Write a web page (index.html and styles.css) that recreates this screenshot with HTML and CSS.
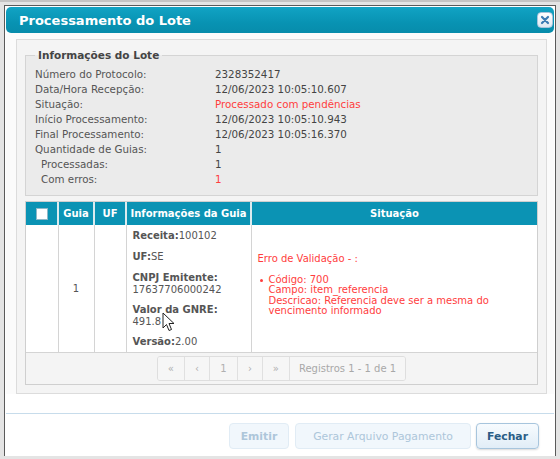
FILE: index.html
```html
<!DOCTYPE html>
<html lang="pt">
<head>
<meta charset="utf-8">
<title>Processamento do Lote</title>
<link rel="stylesheet" href="styles.css">
</head>
<body>
<div class="dialog">
  <div class="titlebar">
    <span class="title">Processamento do Lote</span>
    <span class="close"><svg width="10" height="10" viewBox="0 0 10 10"><path d="M2 2 L8 8 M8 2 L2 8" stroke="#3b7bb3" stroke-width="2.2" stroke-linecap="round"/></svg></span>
  </div>
  <div class="content">
    <div class="panel">
      <fieldset class="info">
        <legend>Informações do Lote</legend>
        <div class="grid">
          <span class="lbl">Número do Protocolo:</span><span class="val">2328352417</span>
          <span class="lbl">Data/Hora Recepção:</span><span class="val">12/06/2023 10:05:10.607</span>
          <span class="lbl">Situação:</span><span class="val red">Processado com pendências</span>
          <span class="lbl">Início Processamento:</span><span class="val">12/06/2023 10:05:10.943</span>
          <span class="lbl">Final Processamento:</span><span class="val">12/06/2023 10:05:16.370</span>
          <span class="lbl">Quantidade de Guias:</span><span class="val">1</span>
          <span class="lbl sub">Processadas:</span><span class="val">1</span>
          <span class="lbl sub">Com erros:</span><span class="val red">1</span>
        </div>
      </fieldset>
      <div class="tablewrap">
        <table class="grid-table">
          <thead>
            <tr>
              <th class="c-chk"><span class="chk"></span></th>
              <th class="c-guia">Guia</th>
              <th class="c-uf">UF</th>
              <th class="c-inf">Informações da Guia</th>
              <th class="c-sit">Situação</th>
            </tr>
          </thead>
          <tbody>
            <tr>
              <td class="c-chk"></td>
              <td class="c-guia">1</td>
              <td class="c-uf"></td>
              <td class="c-inf">
                <p><b>Receita:</b>100102</p>
                <p><b>UF:</b>SE</p>
                <p><b>CNPJ Emitente:</b><br>17637706000242</p>
                <p><b>Valor da GNRE:</b><br>491.8</p>
                <p><b>Versão:</b>2.00</p>
              </td>
              <td class="c-sit">
                <p class="err">Erro de Validação - :</p>
                <ul class="errlist">
                  <li>Código: 700<br>Campo: item_referencia<br>Descricao: Referencia deve ser a mesma do vencimento informado</li>
                </ul>
              </td>
            </tr>
          </tbody>
        </table>
        <div class="pager">
          <div class="pgroup">
            <span class="pbtn w26">«</span><span class="pbtn w24">‹</span><span class="pbtn w27">1</span><span class="pbtn w24">›</span><span class="pbtn w26">»</span><span class="pbtn pinfo">Registros 1 - 1 de 1</span>
          </div>
        </div>
      </div>
    </div>
  </div>
  <div class="footer">
    <button class="btn disabled b-emitir">Emitir</button>
    <button class="btn disabled b-gerar">Gerar Arquivo Pagamento</button>
    <button class="btn primary b-fechar">Fechar</button>
  </div>
  <svg class="cursor" width="13" height="20" viewBox="0 0 13 20"><path d="M1 1 L1 16 L4.5 12.5 L7 18.5 L9.5 17.5 L7 11.5 L12 11.5 Z" fill="#fff" stroke="#222" stroke-width="1" stroke-linejoin="round"/></svg>
</div>
</body>
</html>
```

FILE: styles.css
```css
html, body {
  margin: 0;
  padding: 0;
}
body {
  background: #e4e4e4;
  font-family: "DejaVu Sans", Verdana, sans-serif;
  font-size: 10px;
  color: #555;
  padding: 3px 0 0 4px;
  height: 456px;
  overflow: hidden;
  box-sizing: border-box;
  border-top: 2px solid #c4c4c4;
}
.dialog {
  position: relative;
  width: 552px;
  height: 470px;
  background: #fff;
  border: 1px solid #5a5a5a;
  border-bottom: none;
  box-sizing: border-box;
  padding: 1px;
}
.titlebar {
  height: 26px;
  border-radius: 5px;
  background: linear-gradient(#11a3c4, #0893b3 60%, #078cab);
  display: flex;
  align-items: center;
  justify-content: space-between;
  padding: 0 1px 0 13px;
}
.title {
  color: #fff;
  font-weight: bold;
  font-size: 13px;
}
.close {
  width: 16px;
  height: 16px;
  border-radius: 4px;
  background: linear-gradient(#ffffff, #dfe9f2);
  border: 1px solid #a8c4dc;
  display: flex;
  align-items: center;
  justify-content: center;
  box-sizing: border-box;
}
.content {
  padding: 6px 7px 0 10px;
  background: #fbfbfb;
}
.panel {
  border: 1px solid #dcdcdc;
  background: #f4f4f4;
  padding: 9px 8px 8px 8px;
}
.info {
  margin: 0;
  border: 1px solid #d4d4d4;
  background: #ebebeb;
  padding: 6px 9px 8px 9px;
}
.info legend {
  font-weight: bold;
  color: #444;
  font-size: 10.5px;
  padding: 0 3px;
  margin-left: 0;
}
.grid {
  display: grid;
  grid-template-columns: 180px auto;
  line-height: 15px;
  font-size: 10.3px;
}
.lbl { color: #555; }
.lbl.sub { padding-left: 6px; }
.val { color: #444; }
.red { color: #ff3d3d; }

.tablewrap {
  margin-top: 5px;
  border: 1px solid #cfcfcf;
  background: #f4f4f4;
}
.grid-table {
  width: 100%;
  border-collapse: collapse;
  table-layout: fixed;
  background: #fff;
}
.grid-table th {
  background: #0b93b4;
  color: #fff;
  font-weight: bold;
  height: 23px;
  padding: 0;
  border-left: 2px solid #dcebef;
  text-align: center;
  font-size: 10px;
}
.grid-table th:first-child { border-left: none; }
.grid-table td {
  border-left: 1px solid #d4d4d4;
  border-bottom: 1px solid #d4d4d4;
  padding: 0;
  vertical-align: middle;
  color: #555;
}
.grid-table td:first-child { border-left: none; }
.c-chk { width: 31px; }
.c-guia { width: 34px; text-align: center; }
.c-uf { width: 30px; }
.c-inf { width: 123px; }
.chk {
  display: inline-block;
  width: 10px;
  height: 10px;
  background: #fff;
  border: 1px solid #8fb8c8;
  vertical-align: middle;
}
td.c-guia { text-align: center; }
td.c-inf {
  padding: 5px 5px 4px 6px;
  line-height: 12px;
  vertical-align: top;
}
td.c-inf p { margin: 0 0 8px 0; }
td.c-inf p:nth-child(1), td.c-inf p:nth-child(2) { margin-bottom: 9px; }
td.c-inf p:last-child { margin-bottom: 0; }
td.c-inf b { color: #555; }
td.c-sit {
  padding: 0 6px 8px 6px;
  color: #ff3d3d;
  line-height: 10.4px;
}
.err { margin: 0 0 10px 0; line-height: 12px; }
.errlist {
  margin: 0;
  padding-left: 11px;
  list-style: none;
}
.errlist li { position: relative; }
.errlist li::before {
  content: "";
  position: absolute;
  left: -9px;
  top: 4px;
  width: 3px;
  height: 3px;
  border-radius: 50%;
  background: #ff3d3d;
}
.pager {
  height: 31px;
  display: flex;
  align-items: center;
  justify-content: center;
}
.pgroup {
  display: flex;
  height: 23px;
  border: 1px solid #dedede;
  border-radius: 3px;
  background: #f6f6f6;
  overflow: hidden;
}
.pbtn {
  display: flex;
  align-items: center;
  justify-content: center;
  border-left: 1px solid #e0e0e0;
  color: #b0b0b0;
  font-size: 10px;
  background: #f6f6f6;
}
.pbtn:first-child { border-left: none; }
.w26 { width: 26px; }
.w24 { width: 24px; }
.w27 { width: 27px; }
.pbtn.pinfo { padding: 0 9px; color: #a8a8a8; }

.footer {
  margin-top: 19px;
  border-top: 1px solid #c7dceb;
  display: flex;
  justify-content: flex-end;
  padding: 9px 15px 0 0;
}
.btn {
  height: 26px;
  font-family: "DejaVu Sans", Verdana, sans-serif;
  font-size: 10.8px;
  border-radius: 4px;
  padding: 0;
  box-sizing: border-box;
}
.btn.disabled {
  background: #f1f7fc;
  border: 1px solid #e1ecf5;
  color: #adc6da;
}
.b-emitir { width: 60px; font-weight: bold; margin-right: 6px; }
.b-gerar { width: 176px; margin-right: 5px; }
.btn.primary {
  width: 63px;
  background: linear-gradient(#f7fbfe, #e1edf7);
  border: 1px solid #a7c5dd;
  color: #2b5d86;
  font-weight: bold;
  box-shadow: 0 1px 2px rgba(0,0,0,0.15);
}
.cursor {
  position: absolute;
  left: 157px;
  top: 306px;
}
```
